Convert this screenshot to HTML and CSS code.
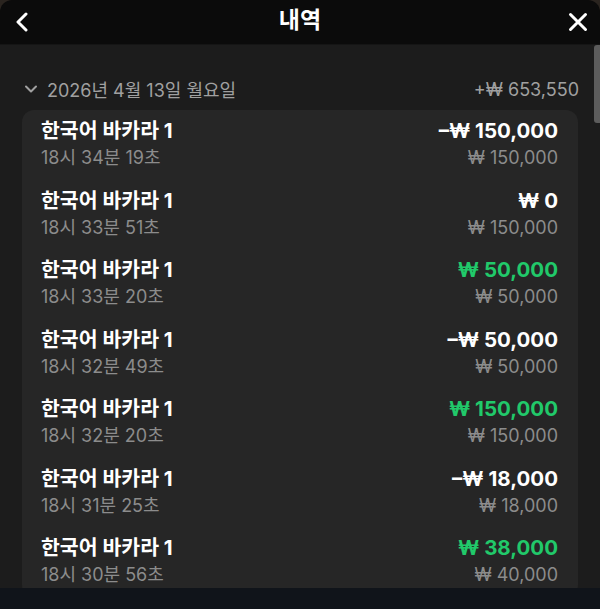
FILE: index.html
```html
<!DOCTYPE html>
<html lang="ko">
<head>
    <meta charset="UTF-8">
    <meta name="viewport" content="width=device-width, initial-scale=1.0">
    <title>내역</title>
    <link rel="stylesheet" href="styles.css">
</head>
<body>
    <div class="sheet">
        <header class="topbar">
            <button class="icon-btn" aria-label="뒤로">
                <svg width="14" height="20" viewBox="0 0 14 20"><path d="M11 2 L3 10 L11 18" fill="none" stroke="#fff" stroke-width="3" stroke-linecap="round" stroke-linejoin="round"/></svg>
            </button>
            <h1 class="title">내역</h1>
            <button class="icon-btn" aria-label="닫기">
                <svg width="20" height="20" viewBox="0 0 20 20"><path d="M2.5 2.5 L17.5 17.5 M17.5 2.5 L2.5 17.5" fill="none" stroke="#fff" stroke-width="3" stroke-linecap="round"/></svg>
            </button>
        </header>

        <main class="history">
            <div class="day-head">
                <div class="day-label">
                    <svg width="14" height="10" viewBox="0 0 14 10"><path d="M2 2.5 L7 7.5 L12 2.5" fill="none" stroke="#a0a0a0" stroke-width="2" stroke-linecap="round" stroke-linejoin="round"/></svg>
                    <span>2026년 4월 13일 월요일</span>
                </div>
                <span class="day-total">+₩ 653,550</span>
            </div>

            <div class="card">
                <div class="row">
                    <div class="row-top"><span class="game">한국어 바카라 1</span><span class="amount">–₩ 150,000</span></div>
                    <div class="row-sub"><span>18시 34분 19초</span><span>₩ 150,000</span></div>
                </div>
                <div class="row">
                    <div class="row-top"><span class="game">한국어 바카라 1</span><span class="amount">₩ 0</span></div>
                    <div class="row-sub"><span>18시 33분 51초</span><span>₩ 150,000</span></div>
                </div>
                <div class="row">
                    <div class="row-top"><span class="game">한국어 바카라 1</span><span class="amount win">₩ 50,000</span></div>
                    <div class="row-sub"><span>18시 33분 20초</span><span>₩ 50,000</span></div>
                </div>
                <div class="row">
                    <div class="row-top"><span class="game">한국어 바카라 1</span><span class="amount">–₩ 50,000</span></div>
                    <div class="row-sub"><span>18시 32분 49초</span><span>₩ 50,000</span></div>
                </div>
                <div class="row">
                    <div class="row-top"><span class="game">한국어 바카라 1</span><span class="amount win">₩ 150,000</span></div>
                    <div class="row-sub"><span>18시 32분 20초</span><span>₩ 150,000</span></div>
                </div>
                <div class="row">
                    <div class="row-top"><span class="game">한국어 바카라 1</span><span class="amount">–₩ 18,000</span></div>
                    <div class="row-sub"><span>18시 31분 25초</span><span>₩ 18,000</span></div>
                </div>
                <div class="row">
                    <div class="row-top"><span class="game">한국어 바카라 1</span><span class="amount win">₩ 38,000</span></div>
                    <div class="row-sub"><span>18시 30분 56초</span><span>₩ 40,000</span></div>
                </div>
            </div>

            <div class="scroll-thumb"></div>
        </main>

        <footer class="bottom"></footer>
    </div>
</body>
</html>
```

FILE: styles.css
```css
* {
    box-sizing: border-box;
}

body {
    margin: 0;
    height: 609px;
    background: #2a241f;
    font-family: Inter, "Noto Sans CJK KR", sans-serif;
    overflow: hidden;
}

.sheet {
    display: flex;
    flex-direction: column;
    height: 609px;
}

.topbar {
    height: 45px;
    flex: none;
    display: flex;
    align-items: center;
    justify-content: space-between;
    padding: 0 12px 0 12px;
    background: #0b0b0b;
    border-radius: 12px 12px 0 0;
    border-bottom: 1px solid #151515;
}

.icon-btn {
    width: 20px;
    height: 24px;
    padding: 0;
    border: none;
    background: none;
    display: flex;
    align-items: center;
    justify-content: center;
}

.title {
    margin: 0;
    color: #fff;
    font-size: 23px;
    font-weight: 700;
    line-height: 26px;
    padding-bottom: 4px;
}

.history {
    position: relative;
    flex: 1;
    overflow: hidden;
    background: #1c1c1c;
    padding: 31px 22px 0 22px;
}

.day-head {
    display: flex;
    justify-content: space-between;
    align-items: center;
    height: 26px;
    margin-bottom: 8px;
    color: #a0a0a0;
    font-size: 18px;
}

.day-label {
    display: flex;
    align-items: center;
    gap: 9px;
    padding-left: 2px;
}

.day-total {
    margin-right: -1px;
}

.card {
    background: #262626;
    border-radius: 12px;
    padding: 0 20px 0 19px;
}

.row {
    padding: 8px 0 10.5px 0;
}

.row-top,
.row-sub {
    display: flex;
    justify-content: space-between;
}

.row-top {
    height: 26px;
    line-height: 26px;
    margin-bottom: 3px;
    color: #fff;
    font-size: 20.5px;
    font-weight: 700;
}

.row-sub {
    height: 22px;
    line-height: 22px;
    color: #8c8c8c;
    font-size: 18px;
}

.amount.win {
    color: #21c96a;
}

.scroll-thumb {
    position: absolute;
    top: 0;
    right: 0;
    width: 6px;
    height: 78px;
    background: #5c5c5c;
    border-radius: 3px 0 0 3px;
}

.bottom {
    height: 21px;
    flex: none;
    background: #10141a;
}
```
